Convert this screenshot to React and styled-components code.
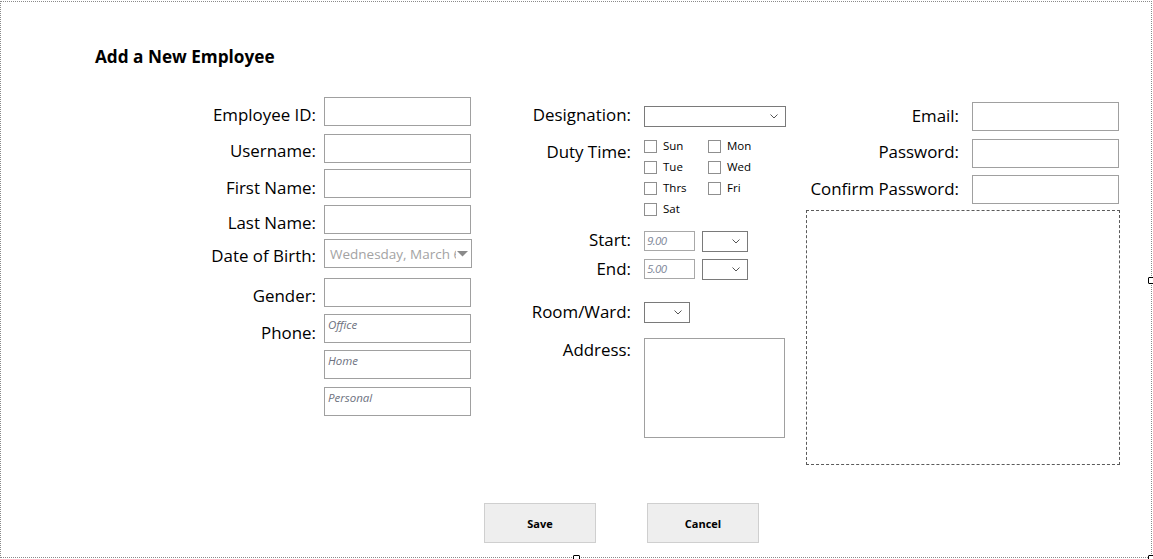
import React from "react";
import styled, { createGlobalStyle } from "styled-components";

const GlobalStyle = createGlobalStyle`
  html, body { margin: 0; padding: 0; background: #ffffff; }
  body { font-family: "Open Sans", "Noto Sans", sans-serif; color: #000; overflow: hidden; }
  * { box-sizing: border-box; }
`;

const Page = styled.div`
  width: 1153px;
  height: 559px;
  padding-top: 1px;
  overflow: hidden;
`;

const Frame = styled.div`
  position: relative;
  width: 1152px;
  height: 557px;
  border: 1px dotted #8a8a8a;
  display: flex;
  flex-direction: column;
`;

const Handle = styled.span`
  position: absolute;
  width: 7px;
  height: 7px;
  background: #fff;
  border: 1px solid #000;
  border-radius: 1px;
  left: ${(p) => p.$x}px;
  top: ${(p) => p.$y}px;
`;

const Title = styled.h1`
  margin: 43px 0 0 94px;
  font-size: 17.2px;
  line-height: 24px;
  font-weight: 700;
`;

const Columns = styled.div`
  display: flex;
  align-items: flex-start;
  margin-top: 28px;
  padding-left: 149px;
`;

const Column = styled.div`
  display: flex;
  flex-direction: column;
  width: ${(p) => p.$w}px;
  margin-top: ${(p) => p.$top || 0}px;
  flex: none;
`;

const Row = styled.div`
  display: flex;
  align-items: flex-start;
  gap: ${(p) => p.$gap}px;
  margin-top: ${(p) => p.$mt || 0}px;
  padding-left: ${(p) => p.$indent || 0}px;
`;

const Label = styled.div`
  width: ${(p) => p.$w}px;
  flex: none;
  text-align: right;
  white-space: nowrap;
  font-size: 16.9px;
  line-height: 20px;
  margin-top: ${(p) => p.$dy}px;
`;

const TextBox = styled.div`
  width: ${(p) => p.$w || 147}px;
  height: ${(p) => p.$h || 29}px;
  flex: none;
  border: 1px solid #a0a0a0;
  background: #fff;
  padding: 3px 0 0 3px;
  font-size: 11.5px;
  line-height: 14px;
  font-style: italic;
  color: #6e7280;
`;

const DateBox = styled.div`
  width: 148px;
  height: 29px;
  flex: none;
  border: 1px solid #a0a0a0;
  background: #fff;
  display: flex;
  align-items: center;
  padding: 0 0 0 5px;
  overflow: visible;
`;

const DateText = styled.span`
  flex: none;
  white-space: nowrap;
  font-size: 13.5px;
  line-height: 18px;
  color: #a3a3a3;
`;

const DropMark = styled.span`
  display: flex;
  align-items: center;
  height: 16px;
  padding: 0 1px;
  margin-left: -5px;
  background: #fff;
`;

const Combo = styled.div`
  width: ${(p) => p.$w}px;
  height: 21px;
  flex: none;
  border: 1px solid #7a7a7a;
  background: #fff;
  display: flex;
  align-items: center;
  justify-content: flex-end;
  padding-right: 7px;
`;

const TimeBox = styled.div`
  width: 51px;
  height: 20px;
  flex: none;
  border: 1px solid #a8a8a8;
  background: #fff;
  padding: 2px 0 0 2px;
  font-size: 11.5px;
  line-height: 14px;
  font-style: italic;
  letter-spacing: -0.6px;
  color: #7f889a;
`;

const Controls = styled.div`
  display: flex;
  align-items: flex-start;
  gap: 7px;
`;

const DayGrid = styled.div`
  display: grid;
  grid-template-columns: 64px 64px;
  grid-auto-rows: 21px;
`;

const Day = styled.label`
  display: flex;
  align-items: flex-start;
  gap: 6px;
  font-size: 11.5px;
  line-height: 14px;
`;

const Box = styled.span`
  width: 13px;
  height: 13px;
  flex: none;
  border: 1px solid #8f8f8f;
  background: #fff;
`;

const DayText = styled.span`
  margin-top: -1.5px;
`;

const Memo = styled.div`
  width: 141px;
  height: 100px;
  flex: none;
  border: 1px solid #a0a0a0;
  background: #fff;
`;

const Panel = styled.div`
  width: 314px;
  height: 255px;
  margin: 6px 0 0 20px;
  border: 1px dashed #5a5a5a;
`;

const Buttons = styled.div`
  display: flex;
  gap: 51px;
  margin-top: 38px;
  padding-left: 483px;
`;

const Button = styled.button`
  width: 112px;
  height: 40px;
  border: 1px solid #cfcfcf;
  background: #eeeeee;
  font-family: "Open Sans", "Noto Sans", sans-serif;
  font-weight: 700;
  font-size: 11px;
  color: #000;
  padding: 0;
`;

const Chevron = () => (
  <svg width="8" height="5" viewBox="0 0 8 5">
    <polyline points="0.5,0.5 4,4 7.5,0.5" fill="none" stroke="#555" strokeWidth="1" />
  </svg>
);

const DropTriangle = () => (
  <svg width="11" height="6" viewBox="0 0 11 6">
    <polygon points="0,0 11,0 5.5,5.5" fill="#8a8a8a" />
  </svg>
);

const col1 = { lw: 166, gap: 8 };
const col2 = { lw: 160, gap: 13 };
const col3 = { lw: 173, gap: 13 };

export default function App() {
  return (
    <Page>
      <GlobalStyle />
      <Frame>
        <Title>Add a New Employee</Title>
        <Columns>
          <Column $w={321}>
            <Row $gap={col1.gap}>
              <Label $w={col1.lw} $dy={7.5}>Employee ID:</Label>
              <TextBox />
            </Row>
            <Row $gap={col1.gap} $mt={8}>
              <Label $w={col1.lw} $dy={7.2}>Username:</Label>
              <TextBox />
            </Row>
            <Row $gap={col1.gap} $mt={6}>
              <Label $w={col1.lw} $dy={8.5}>First Name:</Label>
              <TextBox />
            </Row>
            <Row $gap={col1.gap} $mt={7}>
              <Label $w={col1.lw} $dy={7.8}>Last Name:</Label>
              <TextBox />
            </Row>
            <Row $gap={col1.gap} $mt={5}>
              <Label $w={col1.lw} $dy={7.2}>Date of Birth:</Label>
              <DateBox>
                <DateText>Wednesday, March 6</DateText>
                <DropMark>
                  <DropTriangle />
                </DropMark>
              </DateBox>
            </Row>
            <Row $gap={col1.gap} $mt={10}>
              <Label $w={col1.lw} $dy={7.8}>Gender:</Label>
              <TextBox />
            </Row>
            <Row $gap={col1.gap} $mt={7}>
              <Label $w={col1.lw} $dy={8.5}>Phone:</Label>
              <TextBox>Office</TextBox>
            </Row>
            <Row $gap={col1.gap} $mt={7} $indent={col1.lw + col1.gap}>
              <TextBox>Home</TextBox>
            </Row>
            <Row $gap={col1.gap} $mt={8} $indent={col1.lw + col1.gap}>
              <TextBox>Personal</TextBox>
            </Row>
          </Column>

          <Column $w={315} $top={9}>
            <Row $gap={col2.gap}>
              <Label $w={col2.lw} $dy={-1.3}>Designation:</Label>
              <Combo $w={142}>
                <Chevron />
              </Combo>
            </Row>
            <Row $gap={col2.gap} $mt={13}>
              <Label $w={col2.lw} $dy={1.8}>Duty Time:</Label>
              <DayGrid>
                {["Sun", "Mon", "Tue", "Wed", "Thrs", "Fri", "Sat"].map((d) => (
                  <Day key={d}>
                    <Box />
                    <DayText>{d}</DayText>
                  </Day>
                ))}
              </DayGrid>
            </Row>
            <Row $gap={col2.gap} $mt={7}>
              <Label $w={col2.lw} $dy={-0.8}>Start:</Label>
              <Controls>
                <TimeBox>9.00</TimeBox>
                <Combo $w={46}>
                  <Chevron />
                </Combo>
              </Controls>
            </Row>
            <Row $gap={col2.gap} $mt={7}>
              <Label $w={col2.lw} $dy={-0.5}>End:</Label>
              <Controls>
                <TimeBox>5.00</TimeBox>
                <Combo $w={46}>
                  <Chevron />
                </Combo>
              </Controls>
            </Row>
            <Row $gap={col2.gap} $mt={22}>
              <Label $w={col2.lw} $dy={0.3}>Room/Ward:</Label>
              <Combo $w={46}>
                <Chevron />
              </Combo>
            </Row>
            <Row $gap={col2.gap} $mt={15}>
              <Label $w={col2.lw} $dy={2.2}>Address:</Label>
              <Memo />
            </Row>
          </Column>

          <Column $w={333} $top={5}>
            <Row $gap={col3.gap}>
              <Label $w={col3.lw} $dy={3.5}>Email:</Label>
              <TextBox />
            </Row>
            <Row $gap={col3.gap} $mt={8}>
              <Label $w={col3.lw} $dy={2.8}>Password:</Label>
              <TextBox />
            </Row>
            <Row $gap={col3.gap} $mt={7}>
              <Label $w={col3.lw} $dy={3.5}>Confirm Password:</Label>
              <TextBox />
            </Row>
            <Panel />
          </Column>
        </Columns>

        <Buttons>
          <Button type="button">Save</Button>
          <Button type="button">Cancel</Button>
        </Buttons>

        <Handle $x={1147} $y={275} />
        <Handle $x={572} $y={553} />
        <Handle $x={1147} $y={553} />
      </Frame>
    </Page>
  );
}
